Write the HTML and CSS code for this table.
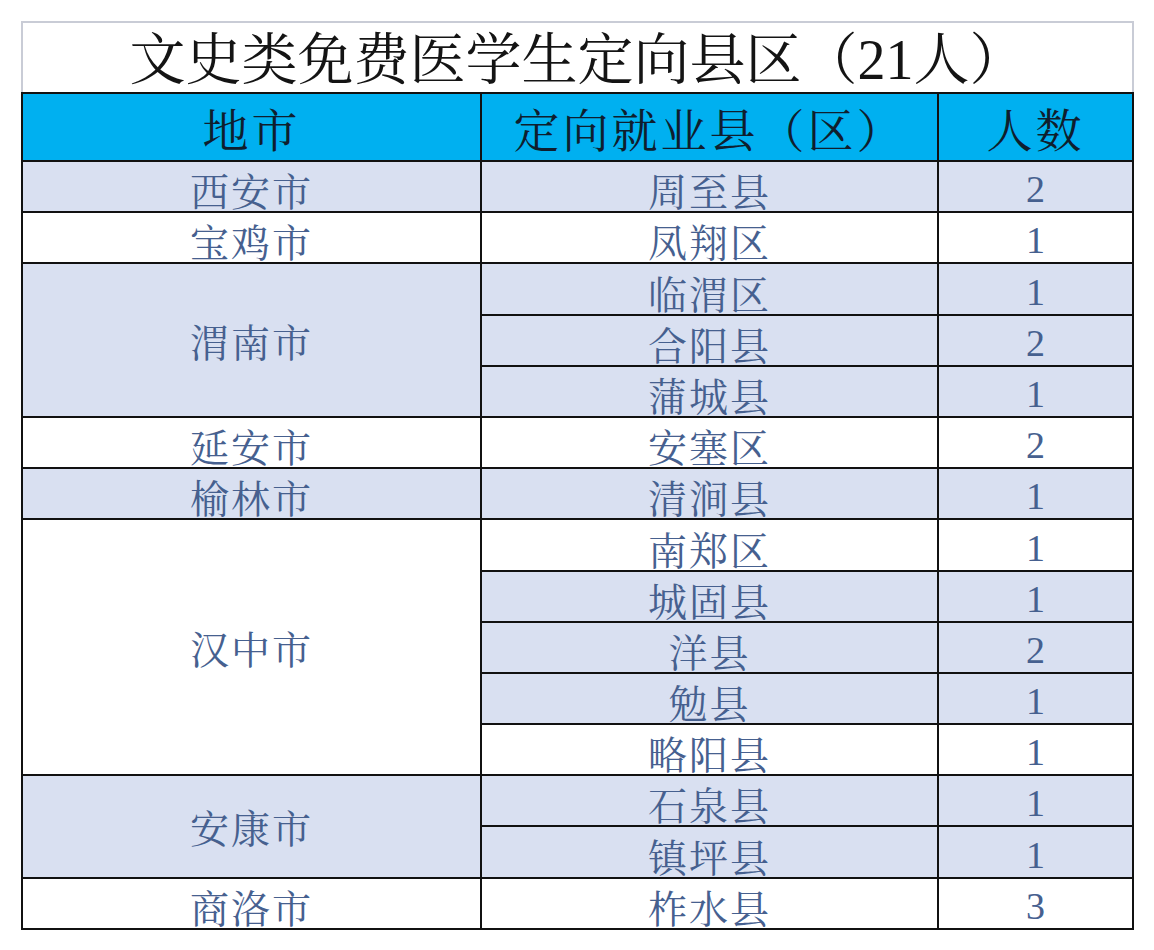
FILE: index.html
```html
<!DOCTYPE html>
<html lang="zh-CN">
<head>
<meta charset="utf-8">
<title>文史类免费医学生定向县区</title>
<link rel="stylesheet" href="styles.css">
</head>
<body>
<div class="page">
<table class="sheet">
  <colgroup>
    <col class="c1"><col class="c2"><col class="c3">
  </colgroup>
  <tr class="title-row"><td colspan="3" class="title">文史类免费医学生定向县区（21人）</td></tr>
  <tr class="head-row"><th>地市</th><th>定向就业县（区）</th><th>人数</th></tr>
  <tr class="r"><td class="s">西安市</td><td class="s">周至县</td><td class="s n">2</td></tr>
  <tr class="r"><td>宝鸡市</td><td>凤翔区</td><td class="n">1</td></tr>
  <tr class="r"><td class="s mid" rowspan="3">渭南市</td><td class="s">临渭区</td><td class="s n">1</td></tr>
  <tr class="r"><td class="s">合阳县</td><td class="s n">2</td></tr>
  <tr class="r"><td class="s">蒲城县</td><td class="s n">1</td></tr>
  <tr class="r"><td>延安市</td><td>安塞区</td><td class="n">2</td></tr>
  <tr class="r"><td class="s">榆林市</td><td class="s">清涧县</td><td class="s n">1</td></tr>
  <tr class="r"><td class="mid" rowspan="5">汉中市</td><td>南郑区</td><td class="n">1</td></tr>
  <tr class="r"><td class="s">城固县</td><td class="s n">1</td></tr>
  <tr class="r"><td class="s">洋县</td><td class="s n">2</td></tr>
  <tr class="r"><td class="s">勉县</td><td class="s n">1</td></tr>
  <tr class="r"><td>略阳县</td><td class="n">1</td></tr>
  <tr class="r"><td class="s mid" rowspan="2">安康市</td><td class="s">石泉县</td><td class="s n">1</td></tr>
  <tr class="r"><td class="s">镇坪县</td><td class="s n">1</td></tr>
  <tr class="r"><td>商洛市</td><td>柞水县</td><td class="n">3</td></tr>
</table>
</div>
</body>
</html>
```
FILE: styles.css
```css
html, body {
  margin: 0;
  padding: 0;
  background: #ffffff;
}
.page {
  padding: 21px 0 0 21px;
}
.sheet {
  border-collapse: collapse;
  table-layout: fixed;
  width: 1111px;
  font-family: "Noto Serif CJK SC", "Noto Sans CJK SC", serif;
}
.c1 { width: 459px; }
.c2 { width: 457px; }
.c3 { width: 195px; }

.title {
  height: 69px;
  padding: 0;
  border: 2px solid #c9ccd6;
  border-bottom: 2px solid #111111;
  text-align: center;
  vertical-align: bottom;
  font-family: "Liberation Serif", "Noto Serif CJK SC", "Noto Sans CJK SC", serif;
  font-size: 56px;
  font-weight: 400;
  line-height: 63px;
  color: #141414;
  letter-spacing: 0;
}
.head-row th {
  height: 66px;
  padding: 0;
  background: #00b0f0;
  border: 2px solid #111111;
  font-size: 46px;
  font-weight: 400;
  line-height: 60px;
  color: #0f1e2e;
  vertical-align: middle;
  letter-spacing: 3px;
}
.r td {
  height: 49.2px;
  padding: 0;
  border: 2px solid #111111;
  background: #ffffff;
  text-align: center;
  vertical-align: bottom;
  font-size: 39px;
  line-height: 44px;
  color: #46608f;
  letter-spacing: 2px;
}
.r td.s {
  background: #d9e0f1;
}
.r td.mid {
  vertical-align: middle;
}
.r td.n {
  font-family: "Liberation Serif", serif;
  font-size: 38px;
  letter-spacing: 0;
  line-height: 43px;
}
```
